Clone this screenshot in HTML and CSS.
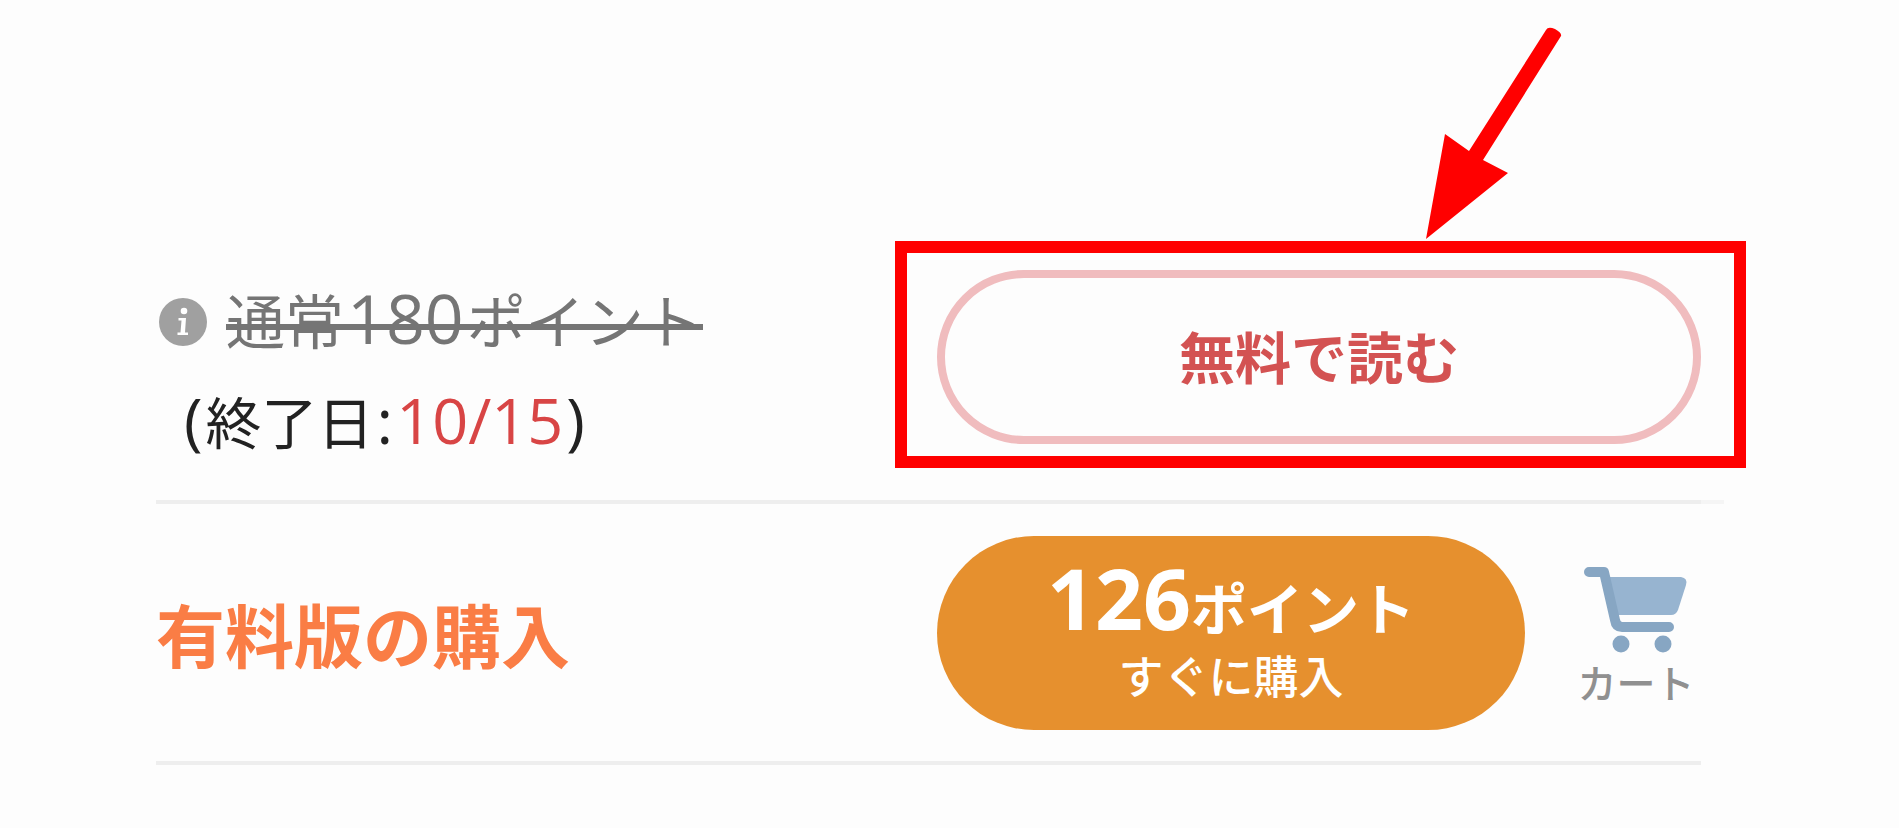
FILE: index.html
```html
<!DOCTYPE html>
<html lang="ja">
<head>
<meta charset="utf-8">
<title>無料で読む</title>
<link rel="stylesheet" href="styles.css">
</head>
<body>
<main class="page">
  <section class="row row-free">
    <div class="price">
      <svg class="info" viewBox="0 0 48 48" aria-hidden="true">
        <circle cx="24" cy="24" r="24" fill="#a0a0a0"/>
        <circle cx="25" cy="13" r="3.3" fill="#fff"/>
        <path d="M19.5 20H27L26 34.500H29V37H18.500V34.500H21.500L22.500 22.500H19.500Z" fill="#fff"/>
      </svg>
      <s class="regular">通常<span class="num">180</span>ポイント</s>
      <p class="until"><span class="latin">(</span><span>終了日</span><span class="latin">:</span><span class="latin date">10/15</span><span class="latin">)</span></p>
    </div>
    <div class="free-action">
      <button class="btn-free" type="button">無料で読む</button>
      <svg class="arrow" viewBox="0 0 138 215" aria-hidden="true">
        <path d="M0 213L19 108L43 125L120 4Q122 0 129 3Q136 7 135 10L57 134L82 147Z" fill="#f00"/>
      </svg>
    </div>
  </section>
  <section class="row row-paid">
    <h2 class="title">有料版の購入</h2>
    <div class="paid-action">
      <button class="btn-buy" type="button">
        <span class="points"><span class="amount">126</span>ポイント</span>
        <span class="now">すぐに購入</span>
      </button>
      <button class="cart" type="button">
        <svg class="cart-icon" viewBox="0 0 104 86" aria-hidden="true">
          <path d="M25 10H97Q104 11 102 18L94 43Q92 48 87 48H32Z" fill="#97b4d0"/>
          <path d="M5 5H20L31 53Q32 60 38 60H85" fill="none" stroke="#87a6c3" stroke-width="10" stroke-linecap="round" stroke-linejoin="round"/>
          <circle cx="37" cy="77" r="8.500" fill="#87a6c3"/>
          <circle cx="79" cy="77" r="8.500" fill="#87a6c3"/>
        </svg>
        <span>カート</span>
      </button>
    </div>
  </section>
</main>
</body>
</html>
```
FILE: styles.css
```css
* { box-sizing: border-box; }
body {
  margin: 0;
  background: #fdfdfd;
  color: #222;
  font-family: "Noto Sans CJK JP", sans-serif;
}
.page { padding: 241px 198px 60px 156px; }
.row {
  position: relative;
  display: grid;
  grid-template-columns: 781fr 764fr;
  border-bottom: 4px solid #eee;
}
.row-free { padding: 29px 0 34px; }
.row-free::after {
  content: "";
  position: absolute;
  left: 100%;
  bottom: -4px;
  width: 23px;
  height: 4px;
  background: #f5f5f5;
}
.row-paid { padding: 32px 0 31px; align-items: center; }
.price {
  display: grid;
  grid-template-columns: 48px 1fr;
  column-gap: 19px;
  align-content: start;
  align-items: center;
  padding-left: 3px;
}
.info { width: 48px; height: 48px; }
.regular {
  position: relative;
  justify-self: start;
  padding-bottom: 6px;
  color: #757575;
  font-size: 59px;
  line-height: 98px;
  text-decoration: none;
}
.regular::after {
  content: "";
  position: absolute;
  left: 0;
  right: 0;
  top: 54px;
  height: 6px;
  background: #757575;
}
.num, .latin, .amount {
  font-family: "Open Sans", sans-serif;
  line-height: 60px;
}
.num { padding: 0 3px; font-size: 68px; }
.until {
  grid-column: 1 / -1;
  display: flex;
  align-items: baseline;
  column-gap: 3px;
  margin: 0;
  padding-left: 25px;
  font-size: 56px;
  line-height: 92px;
}
.latin { font-size: 63px; }
.date { color: #d84545; }
.free-action { position: relative; align-self: start; }
.free-action::before {
  content: "";
  position: absolute;
  inset: -29px -45px -24px -42px;
  border: 12px solid #f00;
}
button {
  margin: 0;
  padding: 0;
  border: 0;
  background: none;
  font-family: inherit;
  cursor: pointer;
}
.btn-free {
  position: relative;
  display: block;
  width: 100%;
  height: 174px;
  padding-bottom: 6px;
  border: 8px solid #f0bcbe;
  border-radius: 87px;
  color: #d35252;
  font-size: 56px;
  font-weight: 700;
}
.arrow {
  position: absolute;
  left: 489px;
  bottom: 203px;
  width: 138px;
  height: 215px;
}
.title {
  margin: 0;
  color: #fa7d45;
  font-size: 69px;
  font-weight: 700;
  line-height: 98px;
}
.paid-action { display: flex; align-items: center; justify-content: space-between; }
.btn-buy {
  display: flex;
  flex-direction: column;
  align-items: center;
  width: 588px;
  padding: 25px 0 31px;
  border-radius: 97px;
  background: #e6902e;
  color: #fff;
}
.points { font-size: 56px; font-weight: 700; line-height: 90px; }
.amount { font-size: 84px; }
.now { font-size: 45px; font-weight: 500; line-height: 48px; }
.cart {
  display: flex;
  flex-direction: column;
  align-items: center;
  width: 130px;
  padding-top: 10px;
  color: #909090;
  font-size: 39px;
  font-weight: 500;
  line-height: 56px;
}
.cart-icon { width: 104px; height: 86px; }
```
